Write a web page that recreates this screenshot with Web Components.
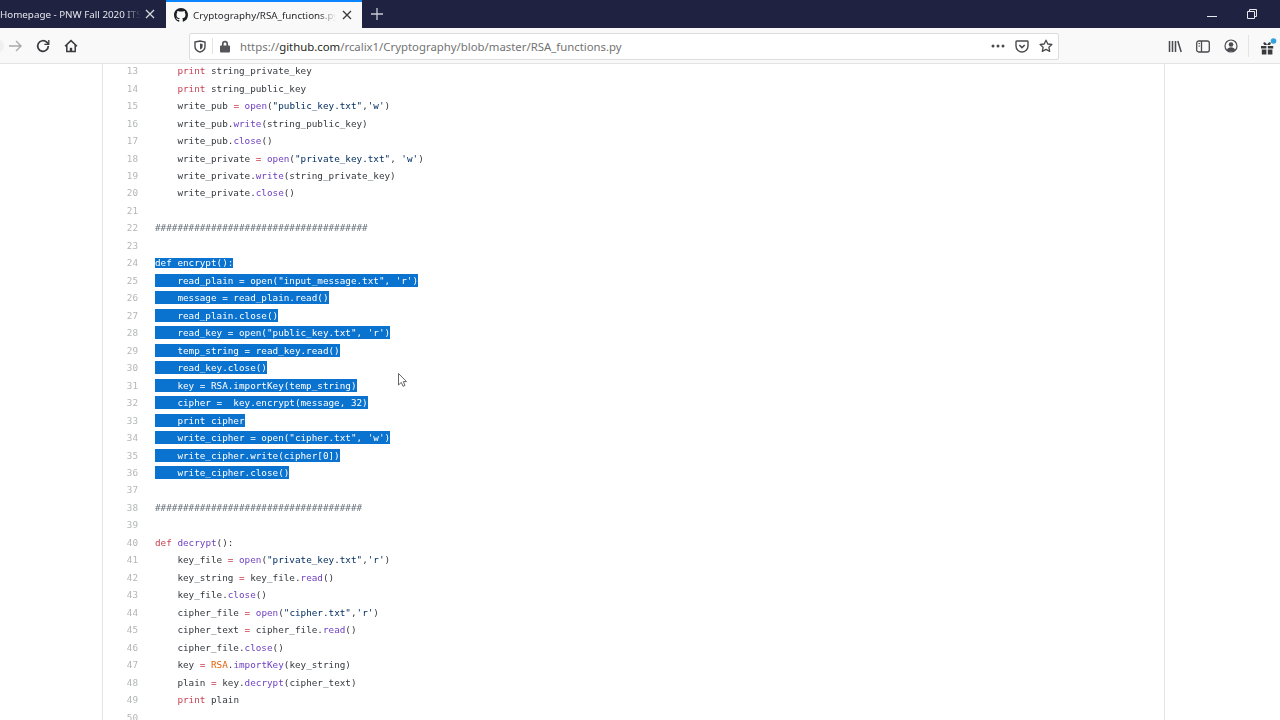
<!DOCTYPE html>
<html>
<head>
<meta charset="utf-8">
<title>Cryptography/RSA_functions.py</title>
<style>
  html, body { margin: 0; height: 100%; background: #fff; overflow: hidden; }
</style>
</head>
<body>
<fx-window>
  <fx-tabs slot="tabs"></fx-tabs>
  <fx-toolbar slot="toolbar"></fx-toolbar>
  <code-blob></code-blob>
  <mouse-arrow slot="overlay"></mouse-arrow>
</fx-window>

<script>
const GITHUB_MARK = 'M8 0C3.58 0 0 3.58 0 8c0 3.54 2.29 6.53 5.47 7.59.4.07.55-.17.55-.38 0-.19-.01-.82-.01-1.49-2.01.37-2.53-.49-2.69-.94-.09-.23-.48-.94-.82-1.13-.28-.15-.68-.52-.01-.53.63-.01 1.08.58 1.23.82.72 1.21 1.87.87 2.33.66.07-.52.28-.87.51-1.07-1.78-.2-3.64-.89-3.64-3.95 0-.87.31-1.59.82-2.15-.08-.2-.36-1.02.08-2.12 0 0 .67-.21 2.2.82.64-.18 1.32-.27 2-.27.68 0 1.36.09 2 .27 1.53-1.04 2.2-.82 2.2-.82.44 1.1.16 1.92.08 2.12.51.56.82 1.27.82 2.15 0 3.07-1.87 3.75-3.65 3.95.29.25.54.73.54 1.48 0 1.07-.01 1.93-.01 2.2 0 .21.15.46.55.38A8.013 8.013 0 0016 8c0-4.42-3.58-8-8-8z';

class FxWindow extends HTMLElement {
  constructor() {
    super();
    this.attachShadow({ mode: 'open' });
    this.shadowRoot.innerHTML = `
      <style>
        :host { display: flex; flex-direction: column; position: relative; width: 1280px; height: 720px; overflow: hidden; background: #fff; }
        .page { flex: 1; min-height: 0; overflow: hidden; }
      </style>
      <slot name="tabs"></slot>
      <slot name="toolbar"></slot>
      <div class="page"><slot></slot></div>
      <slot name="overlay"></slot>
    `;
  }
}

class FxTabs extends HTMLElement {
  constructor() {
    super();
    this.attachShadow({ mode: 'open' });
    this.shadowRoot.innerHTML = `
      <style>
        :host { display: flex; height: 28px; background: #1f2240; color: #fff; font: 9.8px "Noto Sans", "Open Sans", sans-serif; flex: none; }
        .tab { display: flex; align-items: center; box-sizing: border-box; height: 28px; position: relative; }
        .idle { width: 166px; color: #e4e5ea; }
        .active { width: 196px; background: #f9f9fa; color: #2a2a2e; border-top: 2px solid #0a84ff; padding-left: 8px; }
        .active .title { width: 143px; margin-left: 5px; }
        .idle .title { width: 141px; }
        .title { white-space: nowrap; overflow: hidden; -webkit-mask-image: linear-gradient(to right, #000 88%, transparent); mask-image: linear-gradient(to right, #000 88%, transparent); }
        .close { margin-left: 5px; flex: none; }
        .idle .close { margin-left: 3px; }
        .add { margin: 7px 0 0 8px; flex: none; }
        .wm { margin-left: auto; display: flex; align-items: center; height: 28px; }
        .wm svg { display: block; }
      </style>
      <div class="tab idle">
        <span class="title">Homepage - PNW Fall 2020 ITS</span>
        <svg class="close" width="12" height="12" viewBox="0 0 12 12" fill="none" stroke="#d6d7de" stroke-width="1.3"><path d="M2 2l8 8M10 2l-8 8"/></svg>
      </div>
      <div class="tab active">
        <svg width="14" height="14" viewBox="0 0 16 16" fill="#1b1f23"><path d="${GITHUB_MARK}"/></svg>
        <span class="title">Cryptography/RSA_functions.py</span>
        <svg class="close" width="12" height="12" viewBox="0 0 12 12" fill="none" stroke="#3a3a3e" stroke-width="1.3"><path d="M2 2l8 8M10 2l-8 8"/></svg>
      </div>
      <svg class="add" width="14" height="14" viewBox="0 0 14 14" fill="none" stroke="#c9cad3" stroke-width="1.3"><path d="M7 1v12M1 7h12"/></svg>
      <div class="wm">
        <svg width="12" height="12" viewBox="0 0 12 12" stroke="#e8e9ee" fill="none"><path d="M1 8.5h10"/></svg>
        <svg style="margin:0 22px 0 28px" width="12" height="12" viewBox="0 0 12 12" stroke="#e8e9ee" fill="none"><path d="M1.5 3.5h7v7h-7zM3.5 3.5v-2h7v7h-2"/></svg>
      </div>
    `;
  }
}

class FxToolbar extends HTMLElement {
  constructor() {
    super();
    this.attachShadow({ mode: 'open' });
    this.shadowRoot.innerHTML = `
      <style>
        :host { display: flex; align-items: center; box-sizing: border-box; height: 36px; padding-top: 1px; flex: none; background: #f9f9fa; border-bottom: 1px solid #e3e3e5; font: 11.36px "Noto Sans", "Open Sans", sans-serif; color: #737373; }
        svg { display: block; flex: none; }
        .nav { display: flex; align-items: center; width: 189px; flex: none; }
        .url { display: flex; align-items: center; box-sizing: border-box; width: 870px; height: 27px; background: #fff; border: 1px solid #dcdcde; border-radius: 2px; flex: none; }
        .sep { width: 1px; height: 16px; background: #e4e4e6; margin: 0 5px 0 6px; flex: none; }
        .addr { white-space: nowrap; flex: none; margin-left: 9px; }
        .addr b { font-weight: 400; color: #1f1f22; }
        .tools { display: flex; align-items: center; }
      </style>
      <div class="nav">
        <svg style="margin-left:-10px" width="14" height="14" viewBox="0 0 14 14"><circle cx="7" cy="7" r="7" fill="#f0f0f1"/></svg>
        <svg style="margin-left:4px" width="14" height="14" viewBox="0 0 14 14" fill="none" stroke="#a9a9ab" stroke-width="1.4"><path d="M1 7h12M8 2l5 5-5 5"/></svg>
        <svg style="margin-left:14px" width="14" height="14" viewBox="0 0 14 14" fill="none" stroke="#3a3a3e" stroke-width="1.7"><path d="M12.3 7a5.3 5.3 0 1 1-1.6-3.8L12.5 5"/><path d="M12.8 1v4.4H8.4" stroke-width="1.3"/></svg>
        <svg style="margin-left:14px" width="14" height="14" viewBox="0 0 14 14" fill="none" stroke="#3a3a3e" stroke-width="1.5"><path d="M1 7.2 7 1.6l6 5.6M2.8 6v6.6h8.4V6"/><path d="M5.8 12.6V8.8h2.4v3.8" fill="#3a3a3e" stroke="none"/></svg>
      </div>
      <div class="url">
        <svg style="margin-left:4px" width="12" height="13" viewBox="0 0 12 13" fill="none" stroke="#4a4a4f" stroke-width="1.4"><path d="M1 2 6 1l5 1v4.5c0 3-2.2 4.7-5 5.7-2.8-1-5-2.7-5-5.7z"/><path d="M6 3.4 8.6 4v2.5C8.6 8 7.4 9 6 9.600z" fill="#4a4a4f" stroke="none"/></svg>
        <div class="sep"></div>
        <svg style="margin-left:1px" width="12" height="13" viewBox="0 0 12 13" fill="#55555a"><path d="M2.9 5.5V3.9a3.1 3.1 0 0 1 6.2 0v1.6h.9c.5 0 1 .5 1 1v5c0 .5-.5 1-1 1H2c-.5 0-1-.5-1-1v-5c0-.5.5-1 1-1zm1.7 0h2.8V3.9a1.4 1.4 0 0 0-2.8 0z"/></svg>
        <span class="addr">https://<b>github.com</b>/rcalix1/Cryptography/blob/master/RSA_functions.py</span>
        <svg style="margin-left:auto" width="14" height="4" viewBox="0 0 14 4" fill="#4a4a4f"><circle cx="2" cy="2" r="1.5"/><circle cx="7" cy="2" r="1.5"/><circle cx="12" cy="2" r="1.5"/></svg>
        <svg style="margin-left:10px" width="14" height="13" viewBox="0 0 14 13" fill="none" stroke="#4a4a4f" stroke-width="1.4"><path d="M1.7 1h10.6c.4 0 .7.3.7.7V6c0 3.2-2.8 6-6 6S1 9.200 1 6V1.700c0-.4.3-.7.7-.7z"/><path d="M4.300 5 7 7.600 9.700 5" stroke-width="1.600"/></svg>
        <svg style="margin:0 5px 0 10px" width="14" height="14" viewBox="0 0 14 14" fill="none" stroke="#4a4a4f" stroke-width="1.300" stroke-linejoin="round"><path d="M7 1.200 8.800 5l4.100.5-3 2.800.8 4.100L7 10.400l-3.700 2 .8-4.100-3-2.800L5.200 5z"/></svg>
      </div>
      <div class="tools">
        <svg style="margin-left:109px" width="14" height="13" viewBox="0 0 14 13" fill="none" stroke="#4a4a4f" stroke-width="1.500"><path d="M1.500 1v11M4.500 1v11M7.500 1v11M9.800 1l3.400 11"/></svg>
        <svg style="margin-left:14px" width="14" height="13" viewBox="0 0 14 13" fill="none" stroke="#4a4a4f" stroke-width="1.300"><rect x=".7" y="1" width="12.600" height="11" rx="2"/><path d="M5.500 1v11"/><path d="M2.500 3.500h1.500M2.500 6h1.500" stroke-width="1"/></svg>
        <svg style="margin-left:14px" width="14" height="14" viewBox="0 0 14 14" fill="none" stroke="#4a4a4f" stroke-width="1.200"><circle cx="7" cy="7" r="6"/><circle cx="7" cy="5.500" r="2.300" fill="#4a4a4f" stroke="none"/><path d="M2.800 11c.8-2 2.300-2.800 4.200-2.800s3.400.8 4.200 2.800c-2.400 2-6 2-8.400 0z" fill="#4a4a4f" stroke="none"/></svg>
        <div style="width:1px;height:22px;background:#e4e4e6;margin-left:10px"></div>
        <svg style="margin-left:11px" width="18" height="19" viewBox="0 0 18 19"><path d="M1 9h5.400v2.500H1zM7.800 9h5.400v2.500H7.800zM1.800 12.500h4.600v5H1.800zM7.800 12.500h4.600v5H7.800z" fill="#3a3a3e"/><path d="M4.400 8c-1.500-1-1.300-2.700 0-2.700 1.300 0 2.200 1.500 2.700 2.700.5-1.200 1.400-2.700 2.700-2.700 1.300 0 1.500 1.700 0 2.700z" fill="#3a3a3e"/><circle cx="13.500" cy="4" r="2.800" fill="#2fa4dc"/></svg>
      </div>
    `;
  }
}

// short tags: k keyword, f function, q string, o class, c comment line
const LINES = [
  [13, '    <k>print</k> string_private_key'],
  [14, '    <k>print</k> string_public_key'],
  [15, '    write_pub <k>=</k> <f>open</f>(<q>"public_key.txt"</q>,<q>\'w\'</q>)'],
  [16, '    write_pub.<f>write</f>(string_public_key)'],
  [17, '    write_pub.<f>close</f>()'],
  [18, '    write_private <k>=</k> <f>open</f>(<q>"private_key.txt"</q>, <q>\'w\'</q>)'],
  [19, '    write_private.<f>write</f>(string_private_key)'],
  [20, '    write_private.<f>close</f>()'],
  [21, ''],
  [22, '<c>######################################</c>'],
  [23, ''],
  [24, 'def encrypt():', 'first'],
  [25, '    read_plain = open("input_message.txt", \'r\')', 'sel'],
  [26, '    message = read_plain.read()', 'sel'],
  [27, '    read_plain.close()', 'sel'],
  [28, '    read_key = open("public_key.txt", \'r\')', 'sel'],
  [29, '    temp_string = read_key.read()', 'sel'],
  [30, '    read_key.close()', 'sel'],
  [31, '    key = RSA.importKey(temp_string)', 'sel'],
  [32, '    cipher =  key.encrypt(message, 32)', 'sel'],
  [33, '    print cipher', 'sel'],
  [34, '    write_cipher = open("cipher.txt", \'w\')', 'sel'],
  [35, '    write_cipher.write(cipher[0])', 'sel'],
  [36, '    write_cipher.close()', 'sel'],
  [37, ''],
  [38, '<c>#####################################</c>'],
  [39, ''],
  [40, '<k>def</k> <f>decrypt</f>():'],
  [41, '    key_file <k>=</k> <f>open</f>(<q>"private_key.txt"</q>,<q>\'r\'</q>)'],
  [42, '    key_string <k>=</k> key_file.<f>read</f>()'],
  [43, '    key_file.<f>close</f>()'],
  [44, '    cipher_file <k>=</k> <f>open</f>(<q>"cipher.txt"</q>,<q>\'r\'</q>)'],
  [45, '    cipher_text <k>=</k> cipher_file.<f>read</f>()'],
  [46, '    cipher_file.<f>close</f>()'],
  [47, '    key <k>=</k> <o>RSA</o>.<f>importKey</f>(key_string)'],
  [48, '    plain <k>=</k> key.<f>decrypt</f>(cipher_text)'],
  [49, '    <k>print</k> plain'],
  [50, ''],
];

class CodeBlob extends HTMLElement {
  constructor() {
    super();
    this.attachShadow({ mode: 'open' });
    const rows = LINES.map(([n, code, sel]) => `
      <div class="row">
        <span class="num">${n}</span>
        <span class="code"><span class="${sel || ''}">${code}</span></span>
      </div>`).join('');
    this.shadowRoot.innerHTML = `
      <style>
        :host { display: block; box-sizing: border-box; width: 1063px; margin: -1.8px 0 0 102px; border: solid #e1e4e8; border-width: 0 1px; color: #33383d; font: 9.3px/17.48px "DejaVu Sans Mono", "Liberation Mono", monospace; filter: blur(.3px); }
        .row { display: flex; height: 17.48px; }
        .num { width: 35px; text-align: right; color: #b4b6b8; flex: none; }
        .code { margin-left: 17px; white-space: pre; }
        .sel, .first { display: inline-block; background: #0a72cf; color: #fff; line-height: 13px; height: 13px; }
        .first { line-height: 10px; height: 10px; }
        k { color: #c9404f; }
        f { color: #6f42c1; }
        q { color: #032f62; quotes: none; }
        o { color: #e36209; }
        c { color: #6a737d; }
      </style>
      ${rows}
    `;
  }
}

class MouseArrow extends HTMLElement {
  constructor() {
    super();
    this.attachShadow({ mode: 'open' });
    this.shadowRoot.innerHTML = `
      <style>
        :host { display: block; position: absolute; left: 398px; top: 373px; width: 10px; height: 15px; }
        svg { display: block; }
      </style>
      <svg width="10" height="15" viewBox="0 0 10 15"><path d="M.5.5v11.500l2.800-2.600 1.700 3.900 2-.9-1.700-3.800H8.500z" fill="#fff" stroke="#55565a" stroke-width=".9" stroke-linejoin="round"/></svg>
    `;
  }
}

customElements.define('fx-window', FxWindow);
customElements.define('fx-tabs', FxTabs);
customElements.define('fx-toolbar', FxToolbar);
customElements.define('code-blob', CodeBlob);
customElements.define('mouse-arrow', MouseArrow);
</script>
</body>
</html>
